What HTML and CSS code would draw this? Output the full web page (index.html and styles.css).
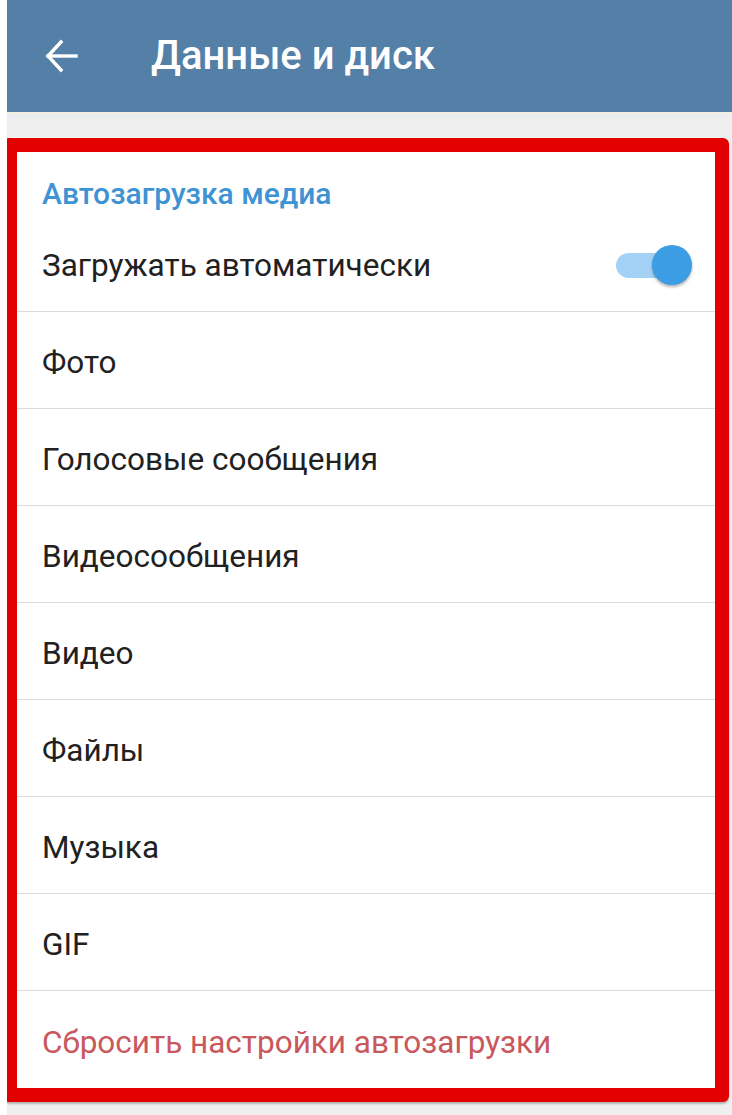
FILE: index.html
```html
<!DOCTYPE html>
<html lang="ru">
<head>
<meta charset="utf-8">
<title>Данные и диск</title>
<link rel="stylesheet" href="styles.css">
</head>
<body>
<div class="app">
  <header class="appbar">
    <button class="back" aria-label="Назад">
      <svg width="36" height="36" viewBox="0 0 36 36" fill="none" stroke="#fff" stroke-width="3.4" stroke-linecap="square">
        <path d="M4 18H32"/>
        <path d="M17 4L4 18L17 32" stroke-linejoin="miter"/>
      </svg>
    </button>
    <h1 class="title">Данные и диск</h1>
  </header>
  <main class="content">
    <section class="card">
      <h2 class="section-title">Автозагрузка медиа</h2>
      <div class="row row-toggle">
        <span class="label">Загружать автоматически</span>
        <span class="switch"><span class="track"></span><span class="thumb"></span></span>
      </div>
      <div class="row"><span class="label">Фото</span></div>
      <div class="row"><span class="label">Голосовые сообщения</span></div>
      <div class="row"><span class="label">Видеосообщения</span></div>
      <div class="row"><span class="label">Видео</span></div>
      <div class="row"><span class="label">Файлы</span></div>
      <div class="row"><span class="label">Музыка</span></div>
      <div class="row"><span class="label">GIF</span></div>
      <div class="row row-last"><span class="label reset">Сбросить настройки автозагрузки</span></div>
    </section>
  </main>
</div>
</body>
</html>
```
FILE: styles.css
```css
* { box-sizing: border-box; }
html, body { margin: 0; padding: 0; background: #ffffff; }
body { font-family: Roboto, "Noto Sans", "Liberation Sans", sans-serif; }

.app {
  margin-left: 7px;
  width: 725px;
  height: 1115px;
  overflow: hidden;
  display: flex;
  flex-direction: column;
}

.appbar {
  height: 112px;
  flex: none;
  background: #5480a8;
  display: flex;
  align-items: center;
  padding-left: 37px;
}

.back {
  background: none;
  border: 0;
  padding: 0;
  width: 36px;
  height: 36px;
  display: flex;
}

.title {
  margin: 0 0 0 71px;
  color: #ffffff;
  font-size: 40px;
  font-weight: 500;
  letter-spacing: 0;
  line-height: 44px;
}

.content {
  flex: 1;
  background: #efefef;
  background-image: linear-gradient(#f3efe3 0, #f3efe3 2px, #e9ecf1 3px, #efefef 6px);
  background-repeat: no-repeat;
  background-size: 100% 26px;
  padding-top: 26px;
}

.card {
  background: #ffffff;
  border: 14px solid #e30000;
  border-radius: 6px;
  margin: 0 3px 0 -4px;
  box-shadow: 0 2px 2px rgba(0,0,0,0.25);
}

.section-title {
  margin: 0;
  padding: 25px 25px 11px;
  font-size: 30px;
  line-height: 34px;
  font-weight: 500;
  color: #3d93d3;
}

.row {
  height: 97px;
  border-bottom: 1px solid #dcdcdc;
  display: flex;
  align-items: center;
  padding: 6px 25px 0;
}

.row-toggle {
  height: 90px;
  justify-content: space-between;
  padding-top: 0;
  padding-bottom: 2px;
}

.row-last { border-bottom: 0; padding-top: 6px; }

.label {
  font-size: 31.5px;
  color: #212121;
  line-height: 36px;
}

.reset { color: #c9585d; }

.switch {
  position: relative;
  width: 76px;
  height: 42px;
  margin-right: -2px;
}

.track {
  position: absolute;
  left: 0;
  top: 8px;
  width: 66px;
  height: 25px;
  border-radius: 13px;
  background: #a3d2f6;
}

.thumb {
  position: absolute;
  left: 36px;
  top: 0;
  width: 40px;
  height: 40px;
  border-radius: 50%;
  background: #3d9de4;
  box-shadow: 0 2px 3px rgba(0,0,0,0.3);
}
```
